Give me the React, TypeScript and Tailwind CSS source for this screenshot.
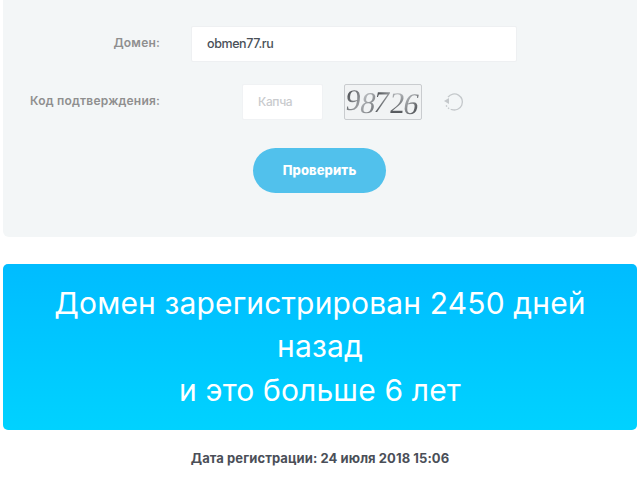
export default function App() {
  return (
    <div className="h-[482px] w-[641px] overflow-hidden bg-white pl-[3px] font-['Inter','Noto_Sans',sans-serif]">
      <div className="w-[634px]">
        <div className="h-[237px] rounded-b-[6px] bg-[#f3f6f7] pt-[26px]">
          <div className="flex items-center">
            <div className="w-[157px] pb-[2px] text-right text-[12px] font-semibold tracking-[0.2px] text-[#8f8f8f]">Домен:</div>
            <div className="ml-[31px] flex h-[36px] w-[326px] items-center rounded-[2px] border border-[#eef0f2] bg-white pl-[15px] text-[12.5px] font-medium tracking-[-0.4px] text-[#4a5058]">obmen77.ru</div>
          </div>
          <div className="mt-[22px] flex items-center">
            <div className="w-[157px] pb-[2px] text-right text-[12px] font-semibold tracking-[0.2px] text-[#8f8f8f]">Код подтверждения:</div>
            <div className="ml-[82px] flex h-[36px] w-[81px] items-center rounded-[2px] border border-[#f0f2f4] bg-white pl-[15px] text-[12px] font-medium tracking-[-0.35px] text-[#c9cbce]">Капча</div>
            <div className="ml-[21px] flex h-[36px] w-[78px] items-center overflow-hidden rounded-[2px] border border-[#c9cccf] bg-[#f1f3f4] pl-[1px] font-['Liberation_Serif',serif] text-[30px] leading-none">
              <span className="-translate-y-[2px] -skew-x-6 bg-gradient-to-br from-[#3f4246] to-[#b9bcbf] bg-clip-text text-transparent">9</span>
              <span className="ml-[0px] translate-y-[1px] -skew-x-12 bg-gradient-to-br from-[#c9cccf] to-[#6a6d71] bg-clip-text text-transparent">8</span>
              <span className="ml-[-2px] translate-y-[0px] -skew-x-12 bg-gradient-to-r from-[#45484c] to-[#9da0a3] bg-clip-text text-transparent">7</span>
              <span className="ml-[1px] translate-y-[1px] -skew-x-6 bg-gradient-to-b from-[#c9cccf] to-[#3f4246] bg-clip-text text-transparent">2</span>
              <span className="ml-[-1px] translate-y-[2px] -skew-x-12 bg-gradient-to-br from-[#c9cccf] to-[#3f4246] bg-clip-text text-transparent">6</span>
            </div>
            <svg className="ml-[21px]" width="21" height="20" viewBox="0 0 21 20" fill="none">
              <path d="M5 5.2A8 8 0 1 1 9 17.6" stroke="#c4c8cb" strokeWidth="1.3" />
              <path d="M9 17.6A8 8 0 0 1 3 13" stroke="#c4c8cb" strokeWidth="1.3" strokeDasharray="1.4 1.6" />
              <path d="M1 9l5-3v6z" fill="#c4c8cb" />
            </svg>
          </div>
          <div className="mt-[28px] flex justify-center pr-[1px]">
            <button className="h-[45px] w-[133px] rounded-full bg-[#51c1ec] text-[13px] font-extrabold tracking-[0.1px] text-white">Проверить</button>
          </div>
        </div>
        <div className="mt-[27px] flex h-[166px] items-center justify-center rounded-[5px] bg-gradient-to-b from-[#00bcff] to-[#00d2ff] px-[40px] text-center text-[30px] leading-[43.5px] tracking-[0.15px] text-white">
          <div>Домен зарегистрирован 2450 дней назад<br />и это больше 6 лет</div>
        </div>
        <div className="mt-[19px] text-center text-[13px] font-bold tracking-[0.08px] text-[#4b4f58]">Дата регистрации: 24 июля 2018 15:06</div>
      </div>
    </div>
  );
}
